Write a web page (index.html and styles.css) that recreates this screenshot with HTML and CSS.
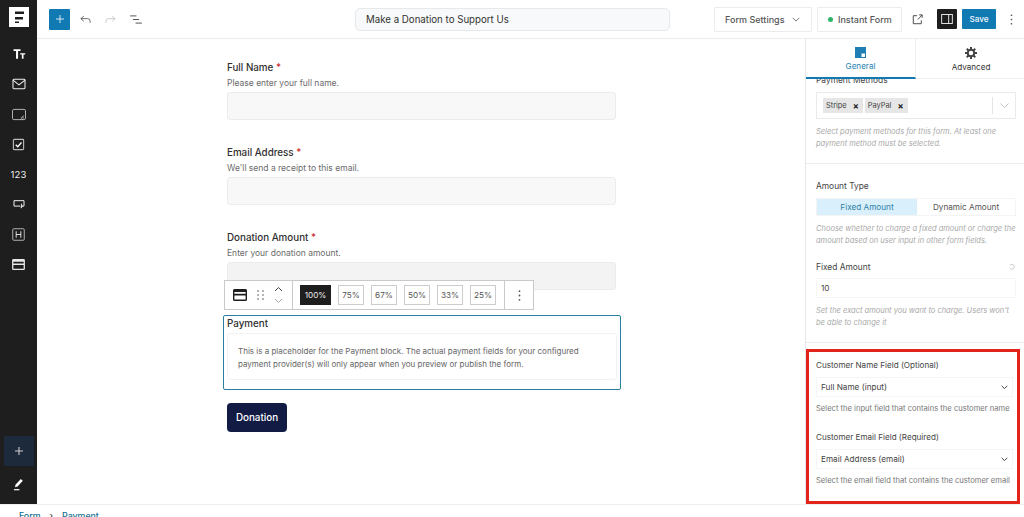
FILE: index.html
```html
<!DOCTYPE html>
<html lang="en">
<head>
<meta charset="utf-8">
<title>Make a Donation to Support Us</title>
<link rel="stylesheet" href="styles.css">
</head>
<body>
<div class="app">
  <div class="main">
    <nav class="rail">
      <div class="logo"><svg width="20" height="20" viewBox="0 0 20 20"><rect width="20" height="20" fill="#fff"/><path d="M6 4.500h9V7H6zM6 10h8v2.500H6zM6 14.500h4V16H6z" fill="#1e1e1e"/></svg></div>
      <div class="rail-items">
        <span class="rail-item"><svg width="14" height="14" viewBox="0 0 18 18" fill="#fff"><path d="M2 3h9v2.200H7.800V15H5.200V5.200H2z"/><path d="M10.500 8h6.500v1.700h-2.200V15h-2.100V9.700h-2.200z"/></svg></span>
        <span class="rail-item"><svg width="14" height="12" viewBox="0 0 16 14" fill="none" stroke="#f2f2f2" stroke-width="1.200"><rect x="1" y="1.500" width="14" height="11" rx="1"/><path d="M1 2.500l7 5.500 7-5.500"/></svg></span>
        <span class="rail-item"><svg width="16" height="13" viewBox="0 0 16 14" fill="none" stroke="#bbb" stroke-width="1"><rect x="1" y="1.500" width="14" height="11" rx="1.500"/><path d="M13 8.500l-3 3M13 10.500l-1 1" stroke="#eee"/></svg></span>
        <span class="rail-item"><svg width="13" height="13" viewBox="0 0 14 14" fill="none" stroke="#bbb" stroke-width="1.200"><rect x="1.500" y="1.500" width="11" height="11" rx="1"/><path d="M4 7.200l2.200 2.200L10.200 4.800" stroke="#fff" stroke-width="1.400"/></svg></span>
        <span class="rail-item rail-num">123</span>
        <span class="rail-item"><svg width="14" height="10" viewBox="0 0 15 12" fill="none" stroke="#eee" stroke-width="1.200"><path d="M9 8.500H1.500V2h12v6.500h-1.500"/><path d="M10.500 5.500l-.5 5.500 2-2.500" fill="#fff" stroke-width=".8"/></svg></span>
        <span class="rail-item"><svg width="13" height="13" viewBox="0 0 14 14" fill="none" stroke="#bbb" stroke-width="1"><rect x=".8" y=".8" width="12.400" height="12.400" rx="1"/><path d="M4.500 3.500v7M9.500 3.500v7M4.500 7h5" stroke="#eee"/></svg></span>
        <span class="rail-item"><svg width="13" height="11" viewBox="0 0 14 12"><path d="M1.500 0h11A1.500 1.500 0 0 1 14 1.500v9a1.500 1.500 0 0 1-1.500 1.500h-11A1.500 1.500 0 0 1 0 10.500v-9A1.500 1.500 0 0 1 1.500 0zM1.400 3v1.800h11.200V3zM1.400 6.500v4.100h11.200V6.500z" fill="#e8e8e8" fill-rule="evenodd"/></svg></span>
      </div>
      <div class="rail-bottom">
        <span class="rail-add"><svg width="8" height="8" viewBox="0 0 9 9" stroke="#ccc" stroke-width="1.200"><path d="M4.500 0v9M0 4.500h9"/></svg></span>
        <span class="rail-pen"><svg width="11" height="13" viewBox="0 0 12 14" fill="#fff"><path d="M8.500 1l2.200 1.800L5 9.200l-2.800.9.500-2.800z"/><path d="M1 12h6v1.300H1z"/></svg></span>
      </div>
    </nav>
    <div class="work">
      <header class="topbar">
        <div class="tools">
          <span class="add-btn"><svg width="8" height="8" viewBox="0 0 9 9" stroke="#e8f3f9" stroke-width="1"><path d="M4.500 0v9M0 4.500h9"/></svg></span>
          <svg class="tool" width="11" height="9" viewBox="0 0 13 10" fill="none" stroke="#555" stroke-width="1"><path d="M4.500 1L1 4l3.500 3M1 4h8a3 3 0 0 1 3 3v2"/></svg>
          <svg class="tool" width="11" height="9" viewBox="0 0 13 10" fill="none" stroke="#c4c4c4" stroke-width="1"><path d="M8.500 1L12 4 8.500 7M12 4H4a3 3 0 0 0-3 3v2"/></svg>
          <svg class="tool" width="12" height="9" viewBox="0 0 13 10" fill="none" stroke="#444" stroke-width="1"><path d="M0 1h7M3 5h7M6 9h7"/></svg>
        </div>
        <div class="title-wrap"><div class="title">Make a Donation to Support Us</div></div>
        <div class="actions">
          <span class="outline-btn settings-btn">Form Settings <svg width="8" height="5" viewBox="0 0 10 6" fill="none" stroke="#555" stroke-width="1"><path d="M1 1l4 4 4-4"/></svg></span>
          <span class="outline-btn instant-btn"><i class="dot"></i>Instant Form</span>
          <svg class="ext" width="11" height="11" viewBox="0 0 13 13" fill="none" stroke="#444" stroke-width="1.100"><path d="M6 2H1.500v9.500H11V7.500M7 6.500L12 1M8.500 1H12v3.500"/></svg>
          <span class="side-toggle"><svg width="12" height="10" viewBox="0 0 14 12" fill="none" stroke="#f2f2f2" stroke-width="1.100"><rect x=".6" y=".6" width="12.800" height="10.800"/><path d="M9 .6v10.800"/></svg></span>
          <span class="save-btn">Save</span>
          <svg class="kebab" width="3" height="11" viewBox="0 0 3 13" fill="#555"><circle cx="1.500" cy="1.500" r="1"/><circle cx="1.500" cy="6.500" r="1"/><circle cx="1.500" cy="11.500" r="1"/></svg>
        </div>
      </header>
      <div class="body">
        <main class="canvas">
          <div class="form">
            <div class="field">
              <div class="label">Full Name <span class="req">*</span></div>
              <div class="desc">Please enter your full name.</div>
              <div class="input"></div>
            </div>
            <div class="field">
              <div class="label">Email Address <span class="req">*</span></div>
              <div class="desc">We'll send a receipt to this email.</div>
              <div class="input"></div>
            </div>
            <div class="field">
              <div class="label">Donation Amount <span class="req">*</span></div>
              <div class="desc">Enter your donation amount.</div>
              <div class="input input-amount"></div>
            </div>
            <div class="payment">
              <div class="block-bar">
                <div class="bar-group bar-icons">
                  <svg width="14" height="12" viewBox="0 0 14 12"><path d="M1.500 0h11A1.500 1.500 0 0 1 14 1.500v9a1.500 1.500 0 0 1-1.500 1.500h-11A1.500 1.500 0 0 1 0 10.500v-9A1.500 1.500 0 0 1 1.500 0zM1.400 3v1.800h11.200V3zM1.400 6.500v4.100h11.200V6.500z" fill="#1e1e1e" fill-rule="evenodd"/></svg>
                  <svg width="7" height="10" viewBox="0 0 7 10" fill="#555"><circle cx="1" cy="1" r=".8"/><circle cx="6" cy="1" r=".8"/><circle cx="1" cy="5" r=".8"/><circle cx="6" cy="5" r=".8"/><circle cx="1" cy="9" r=".8"/><circle cx="6" cy="9" r=".8"/></svg>
                  <svg width="9" height="18" viewBox="0 0 9 18" fill="none" stroke="#444" stroke-width="1"><path d="M1 5l3.500-3.500L8 5"/><path d="M1 13l3.500 3.500L8 13" stroke="#aaa"/></svg>
                </div>
                <div class="bar-group bar-widths">
                  <span class="width-btn width-on">100%</span>
                  <span class="width-btn">75%</span>
                  <span class="width-btn">67%</span>
                  <span class="width-btn">50%</span>
                  <span class="width-btn">33%</span>
                  <span class="width-btn">25%</span>
                </div>
                <div class="bar-group bar-more">
                  <svg width="3" height="11" viewBox="0 0 3 11" fill="#555"><circle cx="1.500" cy="1.200" r=".9"/><circle cx="1.500" cy="5.500" r=".9"/><circle cx="1.500" cy="9.800" r=".9"/></svg>
                </div>
              </div>
              <div class="pay-title">Payment</div>
              <div class="pay-note">This is a placeholder for the Payment block. The actual payment fields for your configured payment provider(s) will only appear when you preview or publish the form.</div>
            </div>
            <div class="donate">Donation</div>
          </div>
        </main>
        <aside class="panel">
          <div class="tabs">
            <div class="tab tab-on">
              <svg width="11" height="11" viewBox="0 0 11 11"><path d="M0 0h11v11H0z" fill="#1f7fb5"/><path d="M6.500 6.500H10V10H6.500z" fill="#fff"/></svg>
              <span>General</span>
            </div>
            <div class="tab">
              <svg width="12" height="12" viewBox="0 0 24 24" fill="none" stroke="#444" stroke-width="4"><circle cx="12" cy="12" r="6.500"/><path d="M12 0v5M12 19v5M0 12h5M19 12h5M3.500 3.500L7 7M17 17l3.500 3.500M3.500 20.500L7 17M17 7l3.500-3.500" stroke-width="4"/></svg>
              <span>Advanced</span>
            </div>
          </div>
          <div class="scroll">
            <section class="sec sec-first">
              <div class="p-label">Payment Methods</div>
              <div class="multi">
                <span class="chip">Stripe <b>×</b></span>
                <span class="chip">PayPal <b>×</b></span>
                <span class="multi-arrow"><svg width="9" height="5" viewBox="0 0 9 5" fill="none" stroke="#c4c4c4" stroke-width="1"><path d="M.5.500l4 4 4-4"/></svg></span>
              </div>
              <p class="hint">Select payment methods for this form. At least one payment method must be selected.</p>
            </section>
            <section class="sec sec-amount">
              <div class="p-label">Amount Type</div>
              <div class="toggle"><span class="tg tg-on">Fixed Amount</span><span class="tg">Dynamic Amount</span></div>
              <p class="hint">Choose whether to charge a fixed amount or charge the amount based on user input in other form fields.</p>
              <div class="p-label p-row">Fixed Amount <svg width="6" height="6" viewBox="0 0 6 6" fill="none" stroke="#bbb" stroke-width=".8"><path d="M1 1.200A2.400 2.400 0 1 1 .8 4"/></svg></div>
              <div class="p-input">10</div>
              <p class="hint">Set the exact amount you want to charge. Users won't be able to change it</p>
            </section>
            <section class="customer">
              <div class="p-label c-label">Customer Name Field (Optional)</div>
              <div class="p-input p-select">Full Name (input)<svg width="7" height="5" viewBox="0 0 7 5" fill="none" stroke="#444" stroke-width="1"><path d="M.7.800l2.800 2.800L6.300.800"/></svg></div>
              <p class="c-hint">Select the input field that contains the customer name</p>
              <div class="p-label c-label c-second">Customer Email Field (Required)</div>
              <div class="p-input p-select">Email Address (email)<svg width="7" height="5" viewBox="0 0 7 5" fill="none" stroke="#444" stroke-width="1"><path d="M.7.800l2.800 2.800L6.300.800"/></svg></div>
              <p class="c-hint">Select the email field that contains the customer email</p>
            </section>
          </div>
        </aside>
      </div>
    </div>
  </div>
  <footer class="crumbs"><span>Form</span><i>›</i><span>Payment</span></footer>
</div>
</body>
</html>
```
FILE: styles.css
```css
* { box-sizing: border-box; }
html, body { margin: 0; height: 517px; overflow: hidden; background: #fff; }
body { font-family: Inter, "Liberation Sans", sans-serif; color: #2f2f2f; }
.app { height: 517px; display: flex; flex-direction: column; overflow: hidden; }
.main { height: 504px; display: flex; flex: none; }

.rail { width: 37px; flex: none; background: #1e1e1e; display: flex; flex-direction: column; align-items: center; padding-top: 7px; }
.logo { width: 20px; height: 20px; display: flex; }
.rail-items { display: flex; flex-direction: column; margin-top: 12px; }
.rail-item { width: 37px; height: 30px; display: flex; align-items: center; justify-content: center; }
.rail-num { color: #f0f0f0; font-size: 9.500px; letter-spacing: .2px; }
.rail-bottom { margin-top: auto; display: flex; flex-direction: column; align-items: center; }
.rail-add { width: 30px; height: 30px; background: #1d2a3c; display: flex; align-items: center; justify-content: center; }
.rail-pen { height: 38px; display: flex; align-items: center; justify-content: center; padding-bottom: 1px; }

.work { flex: 1; min-width: 0; display: flex; flex-direction: column; }
.topbar { height: 39px; flex: none; display: flex; align-items: center; border-bottom: 1px solid #ececec; padding-left: 12px; }
.tools { display: flex; align-items: center; width: 306px; flex: none; }
.add-btn { width: 21px; height: 21px; background: #117ab3; border-radius: 1px; display: flex; align-items: center; justify-content: center; margin-right: 10px; }
.tool { margin-right: 14px; }
.title-wrap { width: 315px; flex: none; }
.title { height: 23px; border: 1px solid #e6e8ea; border-radius: 5px; background: #f8f9fa; font-size: 9.700px; line-height: 21px; padding-left: 10px; color: #333; }
.actions { display: flex; align-items: center; margin-left: 44px; }
.outline-btn { height: 25px; border: 1px solid #ececec; font-size: 9px; font-weight: 500; color: #555; display: flex; align-items: center; border-radius: 1px; }
.settings-btn { width: 98px; padding-left: 10px; gap: 8px; margin-right: 5px; }
.instant-btn { width: 85px; padding-left: 10px; gap: 5px; }
.dot { width: 5px; height: 5px; border-radius: 50%; background: #2cb56b; }
.ext { margin-left: 10px; }
.side-toggle { width: 20px; height: 20px; background: #1e1e1e; border-radius: 1px; margin-left: 14px; display: flex; align-items: center; justify-content: center; }
.save-btn { width: 34px; height: 20px; background: #117ab3; color: #eef6fb; font-size: 8.200px; font-weight: 500; margin-left: 5px; border-radius: 1px; display: flex; align-items: center; justify-content: center; }
.kebab { margin-left: 14px; }

.body { flex: 1; min-height: 0; display: flex; }
.canvas { flex: 1; min-width: 0; }
.form { margin-left: 190px; width: 389px; padding-top: 22px; }
.field { height: 85px; }
.label { font-size: 9.800px; line-height: 14px; font-weight: 500; color: #2f2f2f; }
.req { color: #c8232c; }
.desc { font-size: 8.500px; line-height: 12px; color: #6b6b6b; margin-top: 2px; margin-bottom: 3px; }
.input { height: 28px; background: #f8f8f8; border: 1px solid #ececec; border-radius: 3px; }
.input-amount { background: #f3f3f3; }

.payment { position: relative; width: 398px; height: 75px; margin: -1px 0 13px -4px; border: 1px solid #2a7f9e; border-radius: 2px; padding: 1px 3px 0; }
.block-bar { position: absolute; left: 0; top: -36px; width: 310px; height: 30px; background: #fff; border: 1px solid #c9c9c9; display: flex; align-items: stretch; }
.bar-group { display: flex; align-items: center; }
.bar-icons { width: 68px; padding-left: 8px; gap: 10px; border-right: 1px solid #c9c9c9; }
.bar-widths { width: 212px; padding-left: 7px; gap: 7px; border-right: 1px solid #c9c9c9; }
.bar-more { flex: 1; justify-content: center; }
.width-btn { width: 26px; height: 20px; border: 1px solid #ccc; font-size: 8.200px; display: flex; align-items: center; justify-content: center; color: #555; }
.width-on { width: 31px; background: #1e1e1e; border-color: #1e1e1e; color: #eee; }
.pay-title { font-size: 9.800px; line-height: 13px; font-weight: 500; color: #2f2f2f; }
.pay-note { margin-top: 3px; height: 47px; border: 1px solid #f2f2f2; border-radius: 3px; padding: 11px 10px 0; font-size: 8px; line-height: 12.500px; color: #666; }
.donate { width: 60px; height: 29px; background: #111b44; color: #fff; border-radius: 4px; font-size: 9.800px; font-weight: 500; display: flex; align-items: center; justify-content: center; }

.panel { width: 219px; flex: none; border-left: 1px solid #e6e6e6; display: flex; flex-direction: column; min-height: 0; }
.tabs { height: 40px; flex: none; display: flex; border-bottom: 1px solid #eee; }
.tab { flex: none; width: 110px; display: flex; flex-direction: column; align-items: center; justify-content: center; gap: 3px; font-size: 8.100px; color: #333; padding-top: 2px; }
.tab-on { color: #1f7fb5; border-right: 1px solid #eee; border-bottom: 2px solid #117ab3; height: 40px; }
.scroll { flex: 1; min-height: 0; overflow: hidden; }
.sec { padding: 0 8px 0 10px; border-bottom: 1px solid #ececec; }
.sec-first { height: 90px; margin-top: -5px; }
.sec-amount { height: 179px; padding-top: 16px; }
.p-label { font-size: 8.400px; line-height: 12px; color: #444; }
.multi { height: 27px; margin-top: 6px; border: 1px solid #eaeaea; display: flex; align-items: center; padding-left: 6px; gap: 2px; }
.chip { height: 15px; background: #e6e6e6; font-size: 7.400px; color: #444; padding: 0 4px 0 3px; display: flex; align-items: center; gap: 6px; }
.chip b { font-size: 9px; color: #222; line-height: 9px; }
.multi-arrow { margin-left: auto; width: 23px; height: 17px; border-left: 1px solid #e5e5e5; display: flex; align-items: center; justify-content: center; }
.hint { margin: 7px 0 0; font-size: 7.500px; line-height: 11.500px; font-style: italic; color: #a8a8a8; }
.toggle { height: 18px; margin-top: 6px; display: flex; border: 1px solid #f4f4f4; font-size: 8.200px; }
.tg { flex: 1; display: flex; align-items: center; justify-content: center; color: #555; }
.tg-on { background: #d9effb; color: #2f7fa8; flex: none; width: 100px; }
.p-row { display: flex; align-items: center; justify-content: space-between; margin-top: 15px; padding-right: 1px; }
.p-input { height: 20px; margin-top: 5px; border: 1px solid #f5f5f5; font-size: 8.200px; color: #444; display: flex; align-items: center; padding-left: 4px; }
.c-label { color: #444; font-size: 8.100px; }
.p-select { justify-content: space-between; padding-right: 4px; margin-top: 6px; }
.c-hint { margin: 6px 0 0; font-size: 7.600px; line-height: 12px; color: #777; white-space: nowrap; }
.c-second { margin-top: 16px; }
.customer { margin: 6px 4px 0 0; height: 155px; border: 3px solid #e2241a; padding: 7px 4px 0 7px; }

.crumbs { height: 13px; flex: none; border-top: 1px solid #eee; padding: 5px 0 0 19px; display: flex; gap: 9px; font-size: 8.800px; line-height: 11px; font-weight: 500; color: #16708f; }
.crumbs i { font-style: normal; color: #444; }
```
